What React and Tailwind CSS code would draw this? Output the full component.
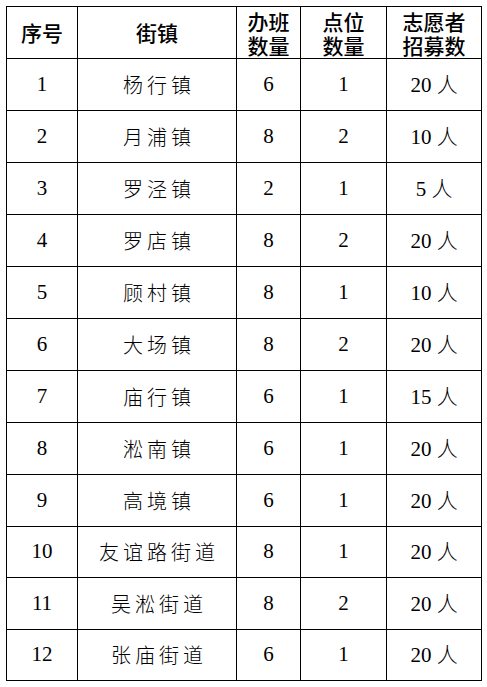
import React from "react";

const rows = [
  ["1", "杨行镇", "6", "1", "20"],
  ["2", "月浦镇", "8", "2", "10"],
  ["3", "罗泾镇", "2", "1", "5"],
  ["4", "罗店镇", "8", "2", "20"],
  ["5", "顾村镇", "8", "1", "10"],
  ["6", "大场镇", "8", "2", "20"],
  ["7", "庙行镇", "6", "1", "15"],
  ["8", "淞南镇", "6", "1", "20"],
  ["9", "高境镇", "6", "1", "20"],
  ["10", "友谊路街道", "8", "1", "20"],
  ["11", "吴淞街道", "8", "2", "20"],
  ["12", "张庙街道", "6", "1", "20"],
];

const th = "border border-black p-0 text-[21px] font-medium font-['Noto_Sans_CJK_SC',sans-serif]";
const tdNum = "border border-black p-0 text-center text-[21px] font-['Liberation_Serif','Noto_Sans_CJK_SC',serif]";
const tdCjk = "border border-black p-0 text-center text-[20px] font-light tracking-[4px] pl-[4px] font-['Noto_Sans_CJK_SC',sans-serif]";

function Two({ a, b }) {
  return (
    <div className="flex flex-col items-center">
      <div className="leading-[24px]">{a}</div>
      <div className="leading-[24px]">{b}</div>
    </div>
  );
}

export default function App() {
  return (
    <div className="w-[487px] h-[687px] bg-white pt-[6px] pl-[6px]">
      <table className="border-collapse table-fixed w-[476px] text-black">
        <colgroup>
          <col className="w-[71px]" />
          <col className="w-[159px]" />
          <col className="w-[64px]" />
          <col className="w-[86px]" />
          <col className="w-[95px]" />
        </colgroup>
        <thead>
          <tr className="h-[52px]">
            <th className={th}>序号</th>
            <th className={th}>街镇</th>
            <th className={th}><Two a="办班" b="数量" /></th>
            <th className={th}><Two a="点位" b="数量" /></th>
            <th className={th}><Two a="志愿者" b="招募数" /></th>
          </tr>
        </thead>
        <tbody>
          {rows.map((r, i) => (
            <tr key={i} className={i === 9 || i === 11 ? "h-[51px]" : "h-[52px]"}>
              <td className={tdNum}>{r[0]}</td>
              <td className={tdCjk}>{r[1]}</td>
              <td className={tdNum}>{r[2]}</td>
              <td className={tdNum}>{r[3]}</td>
              <td className={tdNum}>
                {r[4]} <span className="font-light font-['Noto_Sans_CJK_SC',sans-serif]">人</span>
              </td>
            </tr>
          ))}
        </tbody>
      </table>
    </div>
  );
}
